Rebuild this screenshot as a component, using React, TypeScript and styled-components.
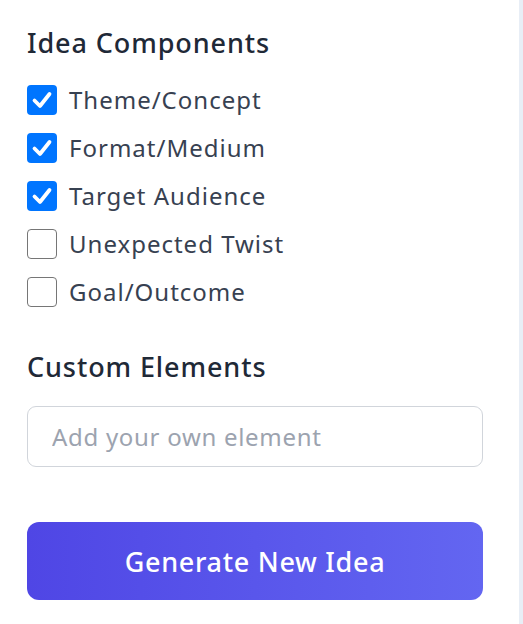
import React, { useState } from "react";
import styled, { createGlobalStyle } from "styled-components";

const GlobalStyle = createGlobalStyle`
  html, body {
    margin: 0;
    padding: 0;
    background: #e8eef6;
  }
  body {
    font-family: "Noto Sans", "DejaVu Sans", sans-serif;
  }
  * {
    box-sizing: border-box;
  }
`;

const components = [
  { label: "Theme/Concept", checked: true },
  { label: "Format/Medium", checked: true },
  { label: "Target Audience", checked: true },
  { label: "Unexpected Twist", checked: false },
  { label: "Goal/Outcome", checked: false },
];

const App = (): JSX.Element => {
  const [items, setItems] = useState(components);

  const toggle = (index: number) => {
    setItems((prev) =>
      prev.map((item, i) =>
        i === index ? { ...item, checked: !item.checked } : item
      )
    );
  };

  return (
    <>
      <GlobalStyle />
      <Panel>
        <SectionTitle>Idea Components</SectionTitle>
        <OptionList>
          {items.map((item, i) => (
            <Option key={item.label} onClick={() => toggle(i)}>
              <Box checked={item.checked}>
                {item.checked && (
                  <svg width="24" height="24" viewBox="0 0 24 24">
                    <path
                      d="M4.5 12.5 L10 18 L19.5 6"
                      fill="none"
                      stroke="#fff"
                      strokeWidth="3.8"
                      strokeLinecap="round"
                      strokeLinejoin="round"
                    />
                  </svg>
                )}
              </Box>
              <OptionLabel>{item.label}</OptionLabel>
            </Option>
          ))}
        </OptionList>

        <SectionTitle>Custom Elements</SectionTitle>
        <ElementInput placeholder="Add your own element" />

        <GenerateButton>Generate New Idea</GenerateButton>
      </Panel>
    </>
  );
};

export default App;

const Panel = styled.div`
  width: 519px;
  min-height: 624px;
  background: #ffffff;
  padding: 22px 36px 0 27px;
  display: flex;
  flex-direction: column;
`;

const SectionTitle = styled.h3`
  margin: 0 0 18px;
  font-size: 27px;
  line-height: 42px;
  font-weight: 500;
  color: #1f2937;
  letter-spacing: 0.9px;
`;

const OptionList = styled.div`
  display: flex;
  flex-direction: column;
  gap: 12px;
  margin-bottom: 36px;
`;

const Option = styled.label`
  display: flex;
  align-items: center;
  gap: 12px;
  height: 36px;
  cursor: pointer;
`;

const Box = styled.span<{ checked: boolean }>`
  width: 30px;
  height: 30px;
  flex-shrink: 0;
  border-radius: 4px;
  display: flex;
  align-items: center;
  justify-content: center;
  background: ${(p) => (p.checked ? "#0075ff" : "#ffffff")};
  border: ${(p) => (p.checked ? "none" : "1.5px solid #767676")};
`;

const OptionLabel = styled.span`
  font-size: 24px;
  line-height: 36px;
  color: #374151;
  letter-spacing: 1px;
`;

const ElementInput = styled.input`
  width: 100%;
  height: 61px;
  padding: 0 24px;
  border: 1.5px solid #d1d5db;
  border-radius: 9px;
  font-family: inherit;
  font-size: 24px;
  letter-spacing: 0.7px;
  color: #374151;
  outline: none;

  &::placeholder {
    color: #9ca3af;
  }
`;

const GenerateButton = styled.button`
  margin-top: 55px;
  width: 100%;
  height: 78px;
  border: none;
  border-radius: 12px;
  background: linear-gradient(90deg, #4f46e5 0%, #6366f1 100%);
  color: #ffffff;
  font-family: inherit;
  font-size: 27px;
  font-weight: 500;
  letter-spacing: 0.7px;
  cursor: pointer;
`;
